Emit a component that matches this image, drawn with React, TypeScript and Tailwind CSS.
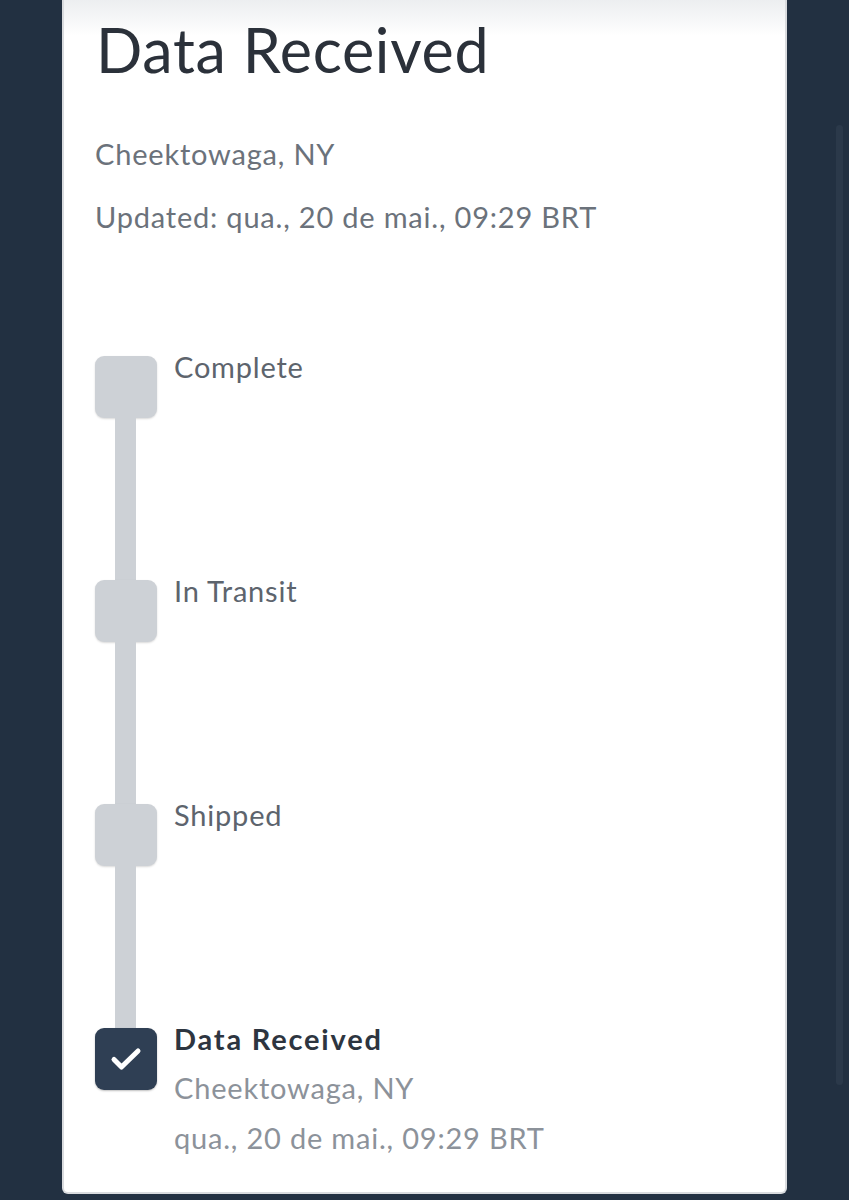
import React from "react";

const font = { fontFamily: "Lato, 'Liberation Sans', sans-serif" };

function Connector() {
	return <div className="ml-[20px] h-[162px] w-[21px] bg-[#cdd1d6]" />;
}

function Box({ done }: { done?: boolean }) {
	if (done) {
		return (
			<div className="flex h-[62px] w-[62px] shrink-0 items-center justify-center rounded-[9px] bg-[#2f3f54] shadow-[0_1px_2px_rgba(0,0,0,0.25)]">
				<svg width="34" height="26" viewBox="0 0 34 26" fill="none">
					<path d="M5 13.5l7.5 7.5L29 5" stroke="white" strokeWidth="5" strokeLinecap="round" strokeLinejoin="round" />
				</svg>
			</div>
		);
	}
	return <div className="h-[62px] w-[62px] shrink-0 rounded-[9px] bg-[#cdd1d6] shadow-[0_1px_2px_rgba(0,0,0,0.15)]" />;
}

function Step({ label }: { label: string }) {
	return (
		<div className="flex items-start gap-[17px]">
			<Box />
			<div className="-mt-[7px] text-[29px] leading-[36px] tracking-[0.8px] text-[#5d646d]">{label}</div>
		</div>
	);
}

export default function App() {
	return (
		<div className="relative min-h-[1200px] bg-[#223041] pl-[62px]" style={font}>
			<div className="h-[1194px] w-[725px] rounded-b-[6px] border-x-2 border-b-2 border-[#d9dbde] bg-[linear-gradient(to_bottom,#eceef0,#ffffff_36px)] pl-[31px]">
				<h1 className="ml-[1px] pt-[14px] text-[61px] leading-[72px] tracking-[0.7px] text-[#2b313a]">Data Received</h1>
				<p className="mt-[51px] text-[29px] leading-[34px] tracking-[0.8px] text-[#6b727b]">Cheektowaga, NY</p>
				<p className="mt-[29px] text-[29px] leading-[34px] tracking-[0.8px] text-[#6b727b]">Updated: qua., 20 de mai., 09:29 BRT</p>

				<div className="mt-[122px] flex flex-col">
					<Step label="Complete" />
					<Connector />
					<Step label="In Transit" />
					<Connector />
					<Step label="Shipped" />
					<Connector />
					<div className="flex items-start gap-[17px]">
						<Box done />
						<div className="-mt-[7px]">
							<div className="text-[29px] font-bold leading-[36px] tracking-[1.8px] text-[#2d3540]">Data Received</div>
							<div className="mt-[13px] text-[29px] leading-[36px] tracking-[0.8px] text-[#8c929a]">Cheektowaga, NY</div>
							<div className="mt-[14px] text-[29px] leading-[36px] tracking-[0.8px] text-[#8c929a]">qua., 20 de mai., 09:29 BRT</div>
						</div>
					</div>
				</div>
			</div>
			<div className="absolute left-[836px] top-[125px] h-[960px] w-[7px] rounded-full bg-[#2b394a]" />
		</div>
	);
}
